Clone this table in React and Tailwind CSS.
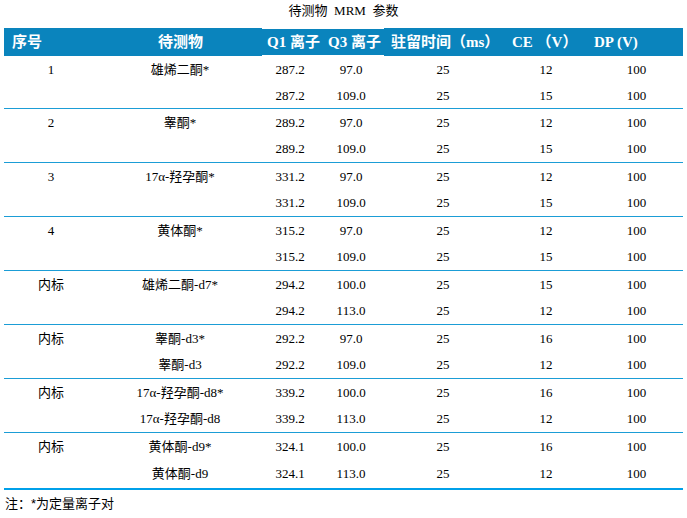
import React from "react";

const COLS = "grid grid-cols-[94px_164px_56px_66px_118px_88px_93px]";
const SERIF = { fontFamily: '"Liberation Serif", "Noto Sans CJK SC", serif' };

const groups = [
  { id: "1", rows: [["雄烯二酮*", "287.2", "97.0", "25", "12", "100"], ["", "287.2", "109.0", "25", "15", "100"]] },
  { id: "2", rows: [["睾酮*", "289.2", "97.0", "25", "12", "100"], ["", "289.2", "109.0", "25", "15", "100"]] },
  { id: "3", rows: [["17α-羟孕酮*", "331.2", "97.0", "25", "12", "100"], ["", "331.2", "109.0", "25", "15", "100"]] },
  { id: "4", rows: [["黄体酮*", "315.2", "97.0", "25", "12", "100"], ["", "315.2", "109.0", "25", "15", "100"]] },
  { id: "内标", rows: [["雄烯二酮-d7*", "294.2", "100.0", "25", "15", "100"], ["", "294.2", "113.0", "25", "12", "100"]] },
  { id: "内标", rows: [["睾酮-d3*", "292.2", "97.0", "25", "16", "100"], ["睾酮-d3", "292.2", "109.0", "25", "12", "100"]] },
  { id: "内标", rows: [["17α-羟孕酮-d8*", "339.2", "100.0", "25", "16", "100"], ["17α-羟孕酮-d8", "339.2", "113.0", "25", "12", "100"]] },
  { id: "内标", rows: [["黄体酮-d9*", "324.1", "100.0", "25", "16", "100"], ["黄体酮-d9", "324.1", "113.0", "25", "12", "100"]] },
];

function Row({ id, cells, h }) {
  return (
    <div className={`${COLS} ${h} items-center text-[13px] text-black`} style={SERIF}>
      <div className="text-center">{id}</div>
      {cells.map((c, i) => (
        <div key={i} className="text-center whitespace-nowrap">{c}</div>
      ))}
    </div>
  );
}

export default function App() {
  return (
    <div className="w-[687px] h-[518px] bg-white overflow-hidden">
      <div className="h-[28px] pt-[3px] text-center text-[13px] leading-[16px] text-black whitespace-pre" style={SERIF}>
        {"待测物  MRM  参数"}
      </div>
      <div className="ml-[4px] w-[679px]">
        <div className={`${COLS} h-[28px] bg-[#0a84bd] text-white font-bold text-[15px] leading-[28px] whitespace-nowrap`} style={SERIF}>
          <div className="pl-[8px]">序号</div>
          <div className="pl-[60px]">待测物</div>
          <div className="pl-[5px] border-y border-white leading-[26px]">Q1 离子</div>
          <div className="pl-[10px] border-y border-white leading-[26px]">Q3 离子</div>
          <div className="pl-[7px]">驻留时间（ms）</div>
          <div className="pl-[10px]">CE （V）</div>
          <div className="pl-[4px]">DP (V)</div>
        </div>
        {groups.map((g, gi) => {
          const last = gi === groups.length - 1;
          const h1 = gi === 0 ? "h-[27px]" : "h-[27px]";
          const h2 = last ? "h-[28px]" : gi === 0 ? "h-[25px]" : "h-[26px]";
          return (
            <div key={gi} className={last ? "border-b-2 border-[#00a0e9]" : "border-b border-[#1b9dd6]"}>
              <Row id={g.id} cells={g.rows[0]} h={h1} />
              <Row id="" cells={g.rows[1]} h={h2} />
            </div>
          );
        })}
      </div>
      <div
        className="pl-[5px] pt-[6px] text-[13px] leading-[16px] text-black"
        style={{ fontFamily: '"Liberation Sans", "Noto Sans CJK SC", sans-serif' }}
      >
        注：*为定量离子对
      </div>
    </div>
  );
}
